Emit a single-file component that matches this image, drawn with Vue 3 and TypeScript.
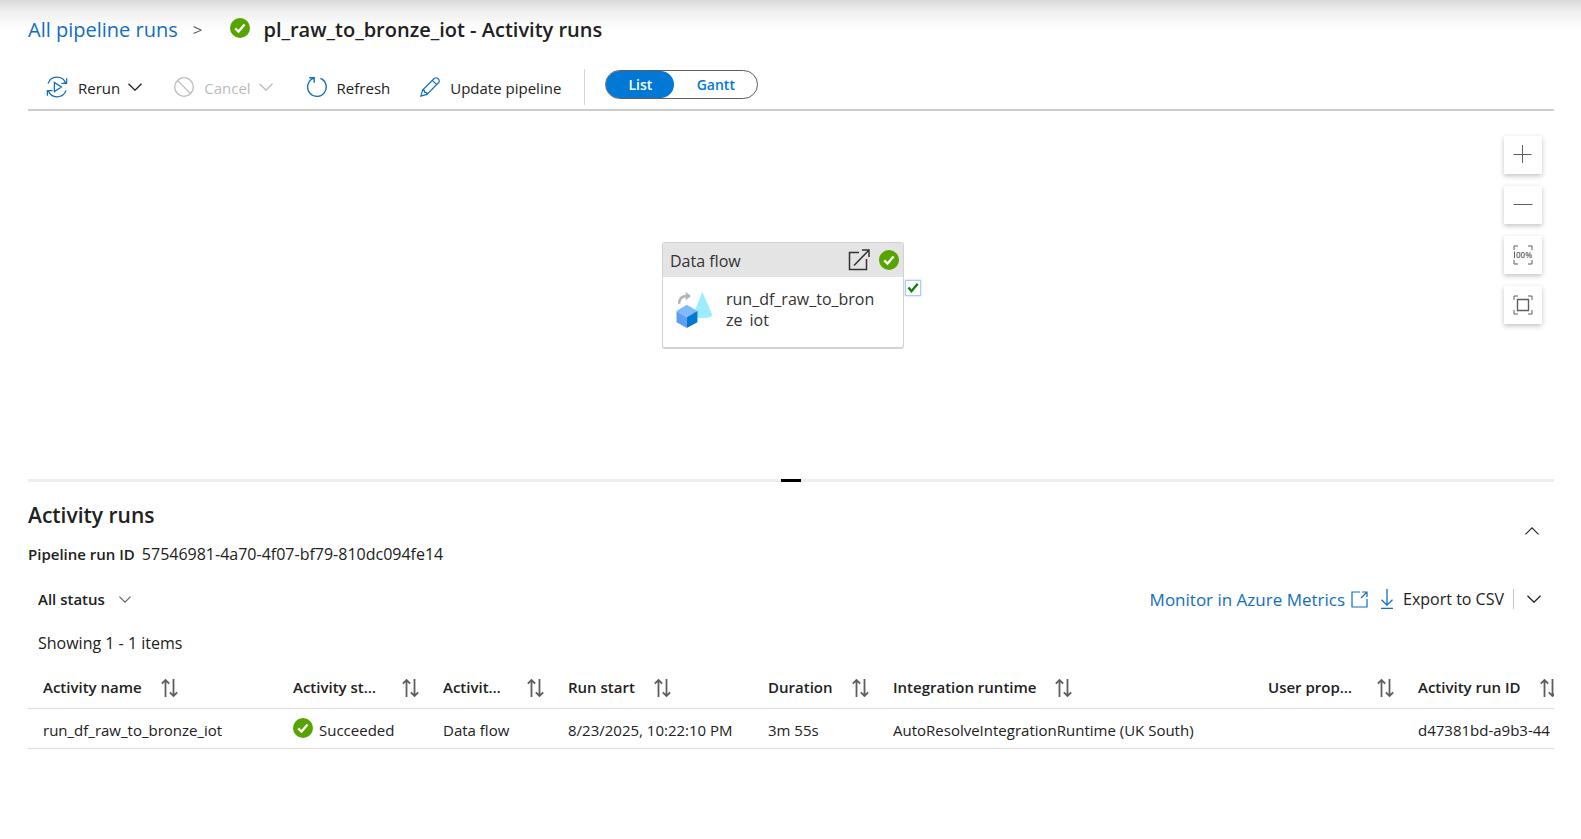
<script setup lang="ts">
import { ref } from 'vue'

interface Column {
  key: keyof ActivityRun
  label: string
  width: number
}

interface ActivityRun {
  name: string
  status: string
  type: string
  start: string
  duration: string
  runtime: string
  properties: string
  runId: string
}

const view = ref<'List' | 'Gantt'>('List')
const views = ['List', 'Gantt'] as const
const status = ref('All status')

const columns: Column[] = [
  { key: 'name', label: 'Activity name', width: 250 },
  { key: 'status', label: 'Activity status', width: 150 },
  { key: 'type', label: 'Activity type', width: 125 },
  { key: 'start', label: 'Run start', width: 200 },
  { key: 'duration', label: 'Duration', width: 125 },
  { key: 'runtime', label: 'Integration runtime', width: 375 },
  { key: 'properties', label: 'User properties', width: 150 },
  { key: 'runId', label: 'Activity run ID', width: 250 },
]

const runs: ActivityRun[] = [
  {
    name: 'run_df_raw_to_bronze_iot',
    status: 'Succeeded',
    type: 'Data flow',
    start: '8/23/2025, 10:22:10 PM',
    duration: '3m 55s',
    runtime: 'AutoResolveIntegrationRuntime (UK South)',
    properties: '',
    runId: 'd47381bd-a9b3-44',
  },
]
</script>

<template>
  <div class="page">
    <svg class="defs" aria-hidden="true">
      <symbol id="ok" viewBox="0 0 20 20">
        <circle cx="10" cy="10" r="10" fill="#57a300" />
        <path d="M5.2 10.4 8.5 13.6 14.6 6.4" fill="none" stroke="#fff" stroke-width="2.3" />
      </symbol>
      <symbol id="down" viewBox="0 0 14 8">
        <path d="M.5 .7 7 7.2 13.5 .7" fill="none" stroke="currentColor" stroke-width="1.3" />
      </symbol>
      <symbol id="sort" viewBox="0 0 17 18">
        <path d="M4.5 18V1M.8 4.6 4.5 1l3.7 3.6M12.5 0v17M8.8 13.4l3.7 3.6 3.7-3.6" fill="none" stroke="#605e5c" stroke-width="1.8" />
      </symbol>
    </svg>

    <header class="crumbs">
      <a href="#">All pipeline runs</a>
      <span class="sep">&gt;</span>
      <svg class="i20"><use href="#ok" /></svg>
      <h1>pl_raw_to_bronze_iot - Activity runs</h1>
    </header>

    <div class="toolbar">
      <button type="button" class="tool">
        <svg class="i22" viewBox="0 0 22 22" fill="none" stroke="#106ebe" stroke-width="1.3">
          <path d="M2 7.6A9.4 9.4 0 0 1 19.6 7M20.6 2.2v5.2h-5.2M20 14.4A9.4 9.4 0 0 1 2.4 15M1.4 19.8v-5.2h5.2M8.4 6.4v9.2l7-4.6z" />
        </svg>
        <span>Rerun</span>
        <svg class="chev"><use href="#down" /></svg>
      </button>
      <button type="button" class="tool cancel" disabled>
        <svg class="i20" viewBox="0 0 20 20" fill="none" stroke="currentColor" stroke-width="1.3">
          <circle cx="10" cy="10" r="9.3" /><path d="m3.4 3.4 13.2 13.2" />
        </svg>
        <span>Cancel</span>
        <svg class="chev"><use href="#down" /></svg>
      </button>
      <button type="button" class="tool refresh">
        <svg class="i20" viewBox="0 0 20 20" fill="none" stroke="#106ebe" stroke-width="1.4">
          <path d="M13.4 1.4A9.3 9.3 0 1 1 7 1.2M2.2 .8h5v5" />
        </svg>
        <span>Refresh</span>
      </button>
      <button type="button" class="tool update">
        <svg class="i20" viewBox="0 0 20 20" fill="none" stroke="#106ebe" stroke-width="1.2">
          <path d="m.9 19.1 1.7-6L14.2 1.5a2.5 2.5 0 0 1 3.6 0l.7.7a2.5 2.5 0 0 1 0 3.6L6.9 17.4zM12.4 3.3l4.3 4.3M2.6 13.1l1.6.2.5 1.9 1.8.4.4 1.8" />
        </svg>
        <span>Update pipeline</span>
      </button>
      <span class="rule" />
      <div class="toggle" role="group" aria-label="View">
        <button v-for="v in views" :key="v" type="button" :class="{ on: view === v }" :aria-pressed="view === v" @click="view = v">{{ v }}</button>
      </div>
    </div>

    <main>
      <section class="canvas">
        <article class="node">
          <div class="node-head">
            <span>Data flow</span>
            <svg class="i22" viewBox="0 0 22 22" fill="none" stroke="#333" stroke-width="1.5">
              <path d="M11 3.5H1.5v17h17V10M6 16.5 20.6 1.4M14 1h7v7" />
            </svg>
            <svg class="i20"><use href="#ok" /></svg>
          </div>
          <div class="node-body">
            <svg class="flow" viewBox="0 0 38 38">
              <path d="M27 0 17.5 24c2 4 17.5 4 20 0z" fill="#9cebff" />
              <path d="M3.2 12C3.2 6.5 6 4 11 4" fill="none" stroke="#b3b3b3" stroke-width="2.6" />
              <path d="m10 0 5.5 4-5.5 4.5z" fill="#b3b3b3" />
              <path d="m11 13 11 6.5L11 26 .5 19.5z" fill="#83b9f9" />
              <path d="M.5 19.5 11 26v11L.5 31z" fill="#5ea0ef" />
              <path d="M22 19.5 11 26v11l11-6z" fill="#0078d4" />
            </svg>
            <p>run_df_raw_to_bronze_iot</p>
          </div>
          <span class="port">
            <svg viewBox="0 0 12 12"><path d="m1.5 5.5 3 3.7 6.2-7.4" fill="none" stroke="#107c10" stroke-width="2.4" /></svg>
          </span>
        </article>

        <div class="zoom">
          <button type="button" aria-label="Zoom in">
            <svg viewBox="0 0 20 20"><path d="M9.5 0v18M.5 9.5h18" /></svg>
          </button>
          <button type="button" aria-label="Zoom out">
            <svg viewBox="0 0 20 20"><path d="M.5 9.5h19" /></svg>
          </button>
          <button type="button" aria-label="Zoom to 100%">
            <svg viewBox="0 0 20 20">
              <path d="M1 5V1h4M15 1h4v4M19 15v4h-4M5 19H1v-4M1.5 6.5V13" />
              <text x="3" y="13">00%</text>
            </svg>
          </button>
          <button type="button" aria-label="Zoom to fit">
            <svg viewBox="0 0 20 20"><path d="M1 5V1h4M15 1h4v4M19 15v4h-4M5 19H1v-4" /><path d="M4.5 4.5h11v11h-11z" stroke-width="1.4" /></svg>
          </button>
        </div>
      </section>

      <div class="splitter"><span /></div>

      <section class="summary">
        <div>
          <h2>Activity runs</h2>
          <p class="run-id"><b>Pipeline run ID</b><span>57546981-4a70-4f07-bf79-810dc094fe14</span></p>
        </div>
        <button type="button" class="collapse" aria-label="Collapse">
          <svg viewBox="0 0 14 8"><path d="M.5 7.3 7 .8l6.5 6.5" fill="none" stroke="currentColor" stroke-width="1.1" /></svg>
        </button>
      </section>

      <div class="filters">
        <label class="status">
          <select v-model="status" aria-label="Status">
            <option>All status</option>
          </select>
          <svg><use href="#down" /></svg>
        </label>
        <a href="#" class="metrics">
          <span>Monitor in Azure Metrics</span>
          <svg viewBox="0 0 17 17" fill="none" stroke="currentColor" stroke-width="1.2"><path d="M9 1H1v15h15V8M11 1h5v5M16 1l-6 6" /></svg>
        </a>
        <button type="button" class="export">
          <svg viewBox="0 0 12 20" fill="none" stroke="#106ebe" stroke-width="1.3"><path d="M6 0v16M.5 10.7 6 16.2l5.5-5.5M0 19.3h12" /></svg>
          <span>Export to CSV</span>
        </button>
        <button type="button" class="more" aria-label="More export options">
          <svg class="chev"><use href="#down" /></svg>
        </button>
      </div>

      <p class="count">Showing 1 - 1 items</p>

      <div class="grid">
        <table>
          <colgroup>
            <col v-for="c in columns" :key="c.key" :style="{ width: c.width + 'px' }" />
          </colgroup>
          <thead>
            <tr>
              <th v-for="c in columns" :key="c.key" scope="col">
                <button type="button"><span>{{ c.label }}</span><svg><use href="#sort" /></svg></button>
              </th>
            </tr>
          </thead>
          <tbody>
            <tr v-for="run in runs" :key="run.runId">
              <td v-for="c in columns" :key="c.key">
                <div v-if="c.key === 'status'" class="state"><svg class="i20"><use href="#ok" /></svg>{{ run.status }}</div>
                <template v-else>{{ run[c.key] }}</template>
              </td>
            </tr>
          </tbody>
        </table>
      </div>
    </main>
  </div>
</template>

<style>
body {
  background: #fff;
}
</style>

<style scoped>
.page {
  min-height: 100vh;
  box-sizing: border-box;
  padding: 0 27px 0 28px;
  background: linear-gradient(#dadada, #f0f0f0 12px, #fff 30px) no-repeat;
  font-family: "Segoe UI", "Open Sans", "Noto Sans", sans-serif;
  font-size: 15px;
  line-height: 24px;
  color: #212121;
}
.defs {
  position: absolute;
  width: 0;
  height: 0;
}
h1, h2, p {
  margin: 0;
}
a {
  color: #106ebe;
  text-decoration: none;
}
button {
  padding: 0;
  border: 0;
  background: none;
  font: inherit;
  color: inherit;
}
svg {
  flex: none;
}
.i20 {
  width: 20px;
  height: 20px;
}
.i22 {
  width: 22px;
  height: 22px;
}
.chev {
  width: 14px;
  height: 8px;
}
.crumbs {
  display: flex;
  align-items: center;
  height: 60px;
  font-size: 20px;
}
.crumbs svg {
  margin-bottom: 4px;
}
.crumbs h1 {
  margin-left: 13px;
  font-size: 20px;
  font-weight: 600;
}
.sep {
  margin: 0 28px 0 15px;
  font-size: 17px;
  color: #605e5c;
}
.toolbar {
  display: flex;
  align-items: center;
  height: 36px;
  padding: 9px 0 4px 18px;
  border-bottom: 2px solid #ccc;
}
.tool {
  display: flex;
  align-items: center;
  gap: 10px;
  height: 36px;
}
.tool span {
  padding-top: 2px;
}
.tool .chev {
  margin-left: -2px;
}
.cancel {
  margin-left: 32px;
  color: #bdbbb9;
}
.refresh {
  margin-left: 34px;
}
.update {
  margin-left: 30px;
}
.rule {
  width: 1px;
  height: 36px;
  margin: 0 20px 0 23px;
  background: #d6d6d6;
}
.toggle {
  display: flex;
  box-sizing: border-box;
  height: 29px;
  margin-bottom: 6px;
  border: 1px solid #605e5c;
  border-radius: 15px;
}
.toggle button {
  width: 83px;
  padding-top: 1px;
  border-radius: 14px;
  font-size: 14px;
  font-weight: 600;
  color: #0078d4;
}
.toggle .on {
  width: 68px;
  background: #0078d4;
  color: #fff;
}
.canvas {
  position: relative;
  height: 368px;
}
.node {
  position: absolute;
  left: 634px;
  top: 131px;
  box-sizing: border-box;
  width: 242px;
  border: 1px solid #d2d2d2;
  border-bottom-width: 2px;
  border-radius: 3px;
  font-size: 16px;
  color: #333;
}
.node-head {
  display: flex;
  align-items: center;
  gap: 9px;
  height: 34px;
  padding: 0 4px 0 7px;
  background: #e4e4e4;
}
.node-head span {
  flex: 1;
  padding-top: 2px;
}
.node-body {
  display: flex;
  gap: 13px;
  height: 54px;
  padding: 12px 24px 4px 13px;
}
.flow {
  width: 37px;
  height: 37px;
  margin-top: 3px;
}
.node-body p {
  height: 38px;
  overflow: hidden;
  overflow-wrap: anywhere;
  line-height: 21px;
}
.port {
  position: absolute;
  left: 242px;
  top: 37px;
  display: grid;
  place-items: center;
  width: 14px;
  height: 14px;
  border: 1px solid #a9cdf2;
  background: #fff;
  box-shadow: 0 0 2px #a9cdf2;
}
.port svg {
  width: 12px;
  height: 12px;
}
.zoom {
  position: absolute;
  right: 12px;
  top: 25px;
  display: grid;
  gap: 12px;
}
.zoom button {
  display: grid;
  place-items: center;
  width: 38px;
  height: 38px;
  background: #fff;
  box-shadow: 0 2px 5px rgba(0, 0, 0, 0.24);
}
.zoom svg {
  width: 20px;
  height: 20px;
  fill: none;
  stroke: #605e5c;
}
.zoom text {
  fill: #605e5c;
  stroke: none;
  font-size: 8px;
  font-weight: 600;
}
.splitter {
  height: 3px;
  background: #ededed;
}
.splitter span {
  display: block;
  width: 20px;
  height: 3px;
  margin: 0 auto;
  background: #000;
}
.summary {
  display: flex;
  justify-content: space-between;
  align-items: flex-start;
  padding-top: 19px;
}
h2 {
  font-size: 21px;
  font-weight: 600;
  line-height: 29px;
}
.run-id {
  display: flex;
  gap: 7px;
  margin-top: 12px;
}
.run-id b {
  font-weight: 600;
}
.run-id span {
  font-size: 16px;
}
.collapse {
  display: grid;
  place-items: center;
  width: 44px;
  height: 60px;
}
.collapse svg {
  width: 14px;
  height: 8px;
}
.filters {
  display: flex;
  align-items: center;
  height: 32px;
  margin-top: 17px;
  padding: 0 13px 0 10px;
}
.status {
  display: flex;
  align-items: center;
  margin-right: auto;
}
.status select {
  appearance: none;
  padding: 0 26px 0 0;
  border: 0;
  background: none;
  font: inherit;
  font-weight: 600;
  color: inherit;
}
.status svg {
  width: 12px;
  height: 7px;
  margin-left: -12px;
  color: #605e5c;
  pointer-events: none;
}
.metrics {
  display: flex;
  align-items: center;
  gap: 6px;
  font-size: 17px;
}
.metrics span {
  padding-top: 2px;
}
.metrics svg {
  width: 17px;
  height: 17px;
}
.export {
  display: flex;
  align-items: center;
  gap: 10px;
  margin-left: 13px;
  padding-right: 9px;
  font-size: 16px;
}
.export svg {
  width: 12px;
  height: 20px;
}
.more {
  display: flex;
  align-items: center;
  height: 20px;
  padding-left: 13px;
  border-left: 1px solid #c8c6c4;
}
.count {
  margin: 16px 0 10px 10px;
  font-size: 16px;
}
.grid {
  overflow: hidden;
}
table {
  width: 1625px;
  table-layout: fixed;
  border-collapse: separate;
  border-spacing: 0;
}
th, td {
  box-sizing: border-box;
  border-bottom: 1px solid #dcdcdc;
  text-align: left;
  white-space: nowrap;
}
th {
  height: 44px;
  padding: 0 9px 0 15px;
}
th button {
  display: flex;
  align-items: center;
  gap: 19px;
  max-width: 100%;
  font-weight: 600;
}
th span {
  min-width: 0;
  overflow: hidden;
  text-overflow: ellipsis;
}
th svg {
  width: 17px;
  height: 18px;
  margin-top: 2px;
}
td {
  height: 40px;
  padding: 3px 0 0 15px;
}
.state {
  display: flex;
  align-items: center;
  gap: 6px;
}
.state svg {
  margin-bottom: 4px;
}
</style>
